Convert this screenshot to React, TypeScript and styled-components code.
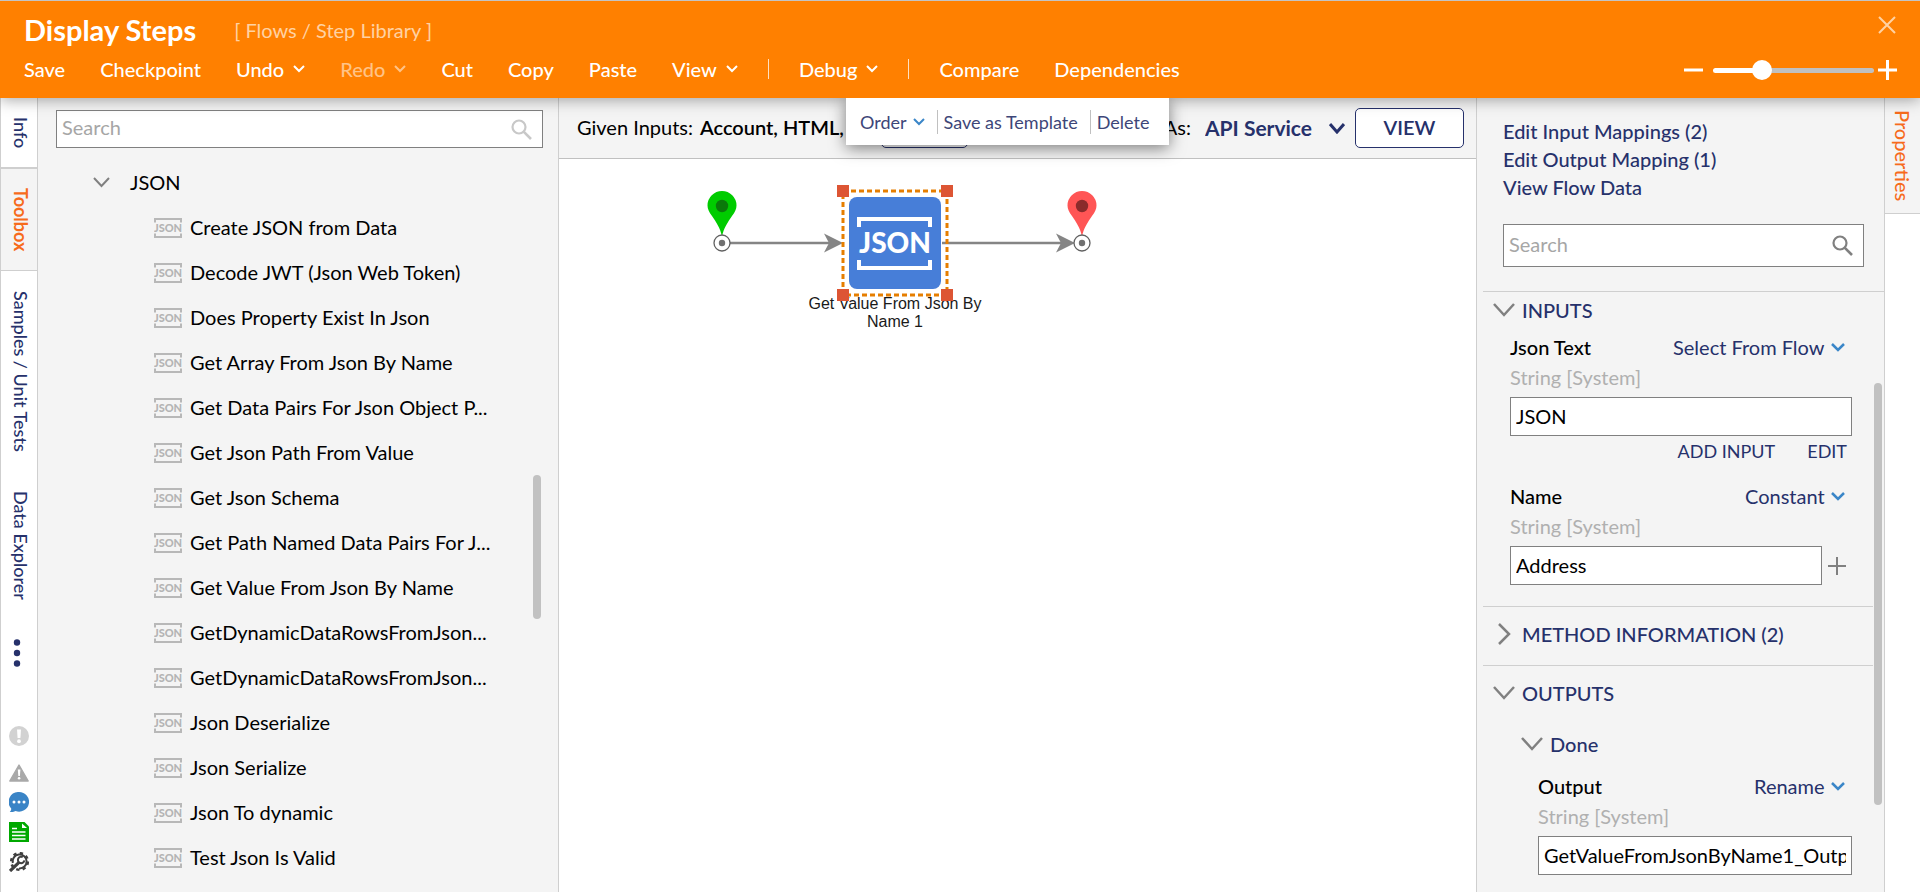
import React from "react";
import styled, { createGlobalStyle } from "styled-components";

const navy = "#26316b";
const line = "#cfcfcf";
const panel = "#f4f4f4";

const GlobalStyle = createGlobalStyle`
  *, *::before, *::after { box-sizing: border-box; }
  body { margin: 0; background: #fff; }
  body, button, input, select {
    font-family: Lato, "Liberation Sans", sans-serif;
    font-size: 20px;
  }
  button, select {
    appearance: none;
    border: 0;
    padding: 0;
    background: none;
    color: inherit;
    cursor: pointer;
  }
  svg { display: block; flex: none; }
`;

const Page = styled.div`
  display: flex;
  flex-direction: column;
  height: 100vh;
  overflow: hidden;
`;

/* ---------- header ---------- */

const Header = styled.header`
  position: relative;
  z-index: 2;
  display: flex;
  justify-content: space-between;
  height: 98px;
  padding: 14px 23px 0 24px;
  border-top: 1px solid #c4c4c4;
  background: #ff8000;
  color: #fff;
  box-shadow: 0 2px 14px rgba(0, 0, 0, 0.35);
`;

const TitleRow = styled.div`
  display: flex;
  align-items: center;
  gap: 38px;
  height: 30px;
`;

const Title = styled.h1`
  margin: 0;
  font-size: 29px;
  line-height: 30px;
  font-weight: 700;
`;

const Breadcrumb = styled.span`
  color: #ffd2a3;
  line-height: 30px;
`;

const MenuBar = styled.nav`
  display: flex;
  align-items: center;
  gap: 35px;
  height: 30px;
  margin-top: 9px;
`;

const MenuButton = styled.button<{ $muted?: boolean }>`
  display: flex;
  align-items: center;
  gap: 9px;
  line-height: 30px;
  font-weight: 500;
  color: ${(p) => (p.$muted ? "#ffc387" : "#fff")};
`;

const MenuDivider = styled.span`
  width: 1px;
  height: 20px;
  margin: 0 -5px;
  background: #ffe0c0;
`;

const HeaderTools = styled.div`
  display: flex;
  flex-direction: column;
  align-items: flex-end;
  gap: 25px;
`;

const IconButton = styled.button`
  display: grid;
  place-items: center;
`;

const ZoomRow = styled.div`
  display: flex;
  align-items: center;
  gap: 4px;
`;

const ZoomSlider = styled.input<{ $fill: number }>`
  appearance: none;
  width: 161px;
  height: 20px;
  margin: 0 0 0 6px;
  background: none;
  &::-webkit-slider-runnable-track {
    height: 5px;
    border-radius: 3px;
    background: linear-gradient(90deg, #fff ${(p) => p.$fill}%, #c0c0c0 ${(p) => p.$fill}%);
  }
  &::-webkit-slider-thumb {
    appearance: none;
    width: 20px;
    height: 20px;
    margin-top: -8px;
    border-radius: 50%;
    background: #fff;
  }
`;

/* ---------- body ---------- */

const Body = styled.div`
  flex: 1;
  min-height: 0;
  display: grid;
  grid-template-columns: 38px 521px minmax(0, 1fr) 408px 36px;
`;

const LeftRail = styled.aside`
  display: flex;
  flex-direction: column;
  border-left: 1px solid ${line};
  border-right: 1px solid ${line};
`;

const RailTab = styled.button<{ $active?: boolean; $size: number }>`
  display: flex;
  align-items: center;
  justify-content: center;
  height: ${(p) => p.$size}px;
  padding-left: 4px;
  writing-mode: vertical-rl;
  font-size: 18px;
  font-weight: ${(p) => (p.$active ? 700 : 500)};
  color: ${(p) => (p.$active ? "#f76b1c" : navy)};
  background: ${(p) => (p.$active ? panel : "#fff")};
  border: 0 solid ${line};
  border-width: ${(p) => (p.$active ? "2px 0 1px" : "0")};
`;

const MoreButton = styled(IconButton)`
  width: 32px;
  margin-top: 20px;
`;

const StatusIcons = styled.div`
  display: flex;
  flex-direction: column;
  align-items: center;
  gap: 10px;
  margin-top: auto;
  margin-bottom: 20px;
  & > :first-child { margin-bottom: 8px; }
`;

const RightRail = styled.aside`
  border-left: 1px solid ${line};
`;

const PropertiesTab = styled.button`
  width: 100%;
  height: 116px;
  writing-mode: vertical-rl;
  font-weight: 500;
  color: #f76b1c;
  background: ${panel};
  border-bottom: 1px solid ${line};
`;

/* ---------- toolbox ---------- */

const Toolbox = styled.section`
  display: grid;
  grid-template-rows: auto minmax(0, 1fr);
  gap: 12px;
  padding: 12px 15px 0 18px;
  background: ${panel};
  border-right: 1px solid ${line};
`;

const SearchBox = styled.label<{ $size: number }>`
  display: flex;
  align-items: center;
  height: ${(p) => p.$size}px;
  padding-right: 10px;
  border: 1px solid #808080;
  background: #fff;
`;

const SearchInput = styled.input`
  flex: 1;
  min-width: 0;
  height: 100%;
  padding: 0 5px 4px;
  border: 0;
  background: none;
  outline: 0;
  &::placeholder { color: #a6a6a6; }
`;

const TreeArea = styled.div`
  display: grid;
  grid-template-columns: minmax(0, 1fr) 10px;
  overflow: hidden;
`;

const Thumb = styled.div<{ $top: number; $size: number }>`
  width: 8px;
  height: ${(p) => p.$size}px;
  margin-top: ${(p) => p.$top}px;
  border-radius: 4px;
  background: #c1c1c1;
`;

const Tree = styled.div`
  overflow: hidden;
`;

const TreeGroup = styled.button`
  display: flex;
  align-items: center;
  gap: 20px;
  padding-left: 37px;
  line-height: 45px;
`;

const TreeList = styled.ul`
  margin: 0;
  padding: 0 38px 0 98px;
  list-style: none;
`;

const TreeItem = styled.li`
  display: flex;
  align-items: center;
  gap: 8px;
  line-height: 45px;
  white-space: nowrap;
`;

const ItemText = styled.span`
  color: #000;
`;

/* ---------- designer ---------- */

const Designer = styled.main`
  display: flex;
  flex-direction: column;
  min-width: 0;
`;

const DesignerBar = styled.div`
  position: relative;
  display: flex;
  align-items: center;
  height: 61px;
  padding: 0 12px 0 18px;
  white-space: nowrap;
  background: ${panel};
  border-bottom: 1px solid #c0c0c0;
`;

const GivenInputs = styled.span`
  display: flex;
  gap: 7px;
  width: 304px;
  padding-bottom: 2px;
  line-height: 24px;
  overflow: hidden;
`;

const Strong = styled.b`
  font-weight: 600;
`;

const OutlineButton = styled.button<{ $wide?: boolean }>`
  width: ${(p) => (p.$wide ? 109 : 87)}px;
  height: 40px;
  padding-bottom: 2px;
  border: 1px solid ${navy};
  border-radius: 5px;
  background: #fff;
  color: ${navy};
  font-weight: 600;
`;

const ViewAs = styled.div`
  display: flex;
  align-items: center;
  gap: 10px;
  margin-left: auto;
  line-height: 24px;
`;

const ViewAsLabel = styled.label`
  padding: 0 4px 2px 0;
`;

const SelectWrap = styled.span<{ $gap?: number }>`
  display: flex;
  align-items: center;
  gap: ${(p) => p.$gap ?? 6}px;
`;

const BoldSelect = styled.select`
  height: 26px;
  padding-bottom: 2px;
  color: ${navy};
  font-size: 21px;
  font-weight: 700;
`;

const FieldSelect = styled.select`
  height: 30px;
  color: ${navy};
`;

const StepMenu = styled.div`
  position: absolute;
  z-index: 3;
  top: 0;
  left: 287px;
  display: flex;
  align-items: center;
  gap: 6px;
  height: 47px;
  padding: 0 20px 0 14px;
  background: #fff;
  box-shadow: 0 3px 16px rgba(0, 0, 0, 0.5);
  clip-path: inset(0 -30px -30px -30px);
`;

const StepAction = styled.button`
  display: flex;
  align-items: center;
  gap: 6px;
  margin-right: 6px;
  line-height: 24px;
  font-size: 18px;
  color: #3d4678;
  &:last-child { margin-right: 0; }
`;

const StepDivider = styled.span`
  width: 1px;
  height: 24px;
  background: #c0c0c0;
`;

const Canvas = styled.div`
  flex: 1;
  min-height: 0;
  overflow: hidden;
`;

/* ---------- properties ---------- */

const Properties = styled.section`
  display: flex;
  flex-direction: column;
  min-width: 0;
  padding-left: 6px;
  background: ${panel};
  border-left: 1px solid ${line};
`;

const PropertiesTop = styled.div`
  padding: 19px 20px 24px;
`;

const LinkList = styled.nav`
  display: flex;
  flex-direction: column;
  align-items: flex-start;
  margin-bottom: 23px;
`;

const PanelLink = styled.a`
  color: ${navy};
  font-weight: 500;
  line-height: 28px;
  text-decoration: none;
`;

const PropertiesScroll = styled.div`
  flex: 1;
  min-height: 0;
  display: grid;
  grid-template-columns: minmax(0, 1fr) 10px;
  column-gap: 1px;
  overflow: hidden;
  border-top: 1px solid ${line};
`;

const Group = styled.div<{ $tight?: boolean }>`
  padding-top: ${(p) => (p.$tight ? 3 : 12)}px;
  padding-bottom: ${(p) => (p.$tight ? 21 : 16)}px;
  & + & { border-top: 1px solid ${line}; }
`;

const GroupHeader = styled.button<{ $nested?: boolean }>`
  display: flex;
  align-items: center;
  gap: 7px;
  margin: ${(p) => (p.$nested ? "21px 0 0 38px" : "0 0 0 10px")};
  line-height: 30px;
  font-weight: 500;
  color: ${navy};
`;

const Field = styled.div<{ $nested?: boolean; $gap: number }>`
  display: flex;
  flex-direction: column;
  margin: ${(p) => p.$gap}px 21px 0 ${(p) => (p.$nested ? 55 : 27)}px;
`;

const FieldHead = styled.div`
  display: flex;
  justify-content: space-between;
  padding-right: 7px;
  line-height: 30px;
`;

const FieldLabel = styled.label`
  font-weight: 500;
`;

const FieldType = styled.span`
  margin-bottom: 5px;
  line-height: 30px;
  color: #b0b0b0;
`;

const FieldRow = styled.div`
  display: flex;
  align-items: center;
  gap: 6px;
`;

const TextInput = styled.input`
  flex: 1;
  min-width: 0;
  height: 39px;
  padding: 0 5px 2px;
  border: 1px solid #808080;
  background: #fff;
  outline: 0;
`;

const AddButton = styled(IconButton)`
  margin-right: 6px;
`;

const FieldActions = styled.div`
  display: flex;
  justify-content: flex-end;
  gap: 32px;
  margin-top: 2px;
  padding-right: 5px;
`;

const TextButton = styled.button`
  font-size: 18px;
  line-height: 26px;
  color: ${navy};
`;

/* ---------- icons ---------- */

type ChevronProps = { w: number; h: number; color?: string; weight?: number };

const Chevron = ({ w, h, color = "currentColor", weight = 2 }: ChevronProps) => (
  <svg width={w} height={h} viewBox={`0 0 ${w} ${h}`} fill="none" stroke={color} strokeWidth={weight}>
    <path d={`M1 1L${w / 2} ${h - 2}L${w - 1} 1`} />
  </svg>
);

const ChevronRight = () => (
  <svg width="22" height="22" viewBox="0 0 22 22" fill="none" stroke="#808080" strokeWidth="2.5">
    <path d="M6 1L16 11L6 21" />
  </svg>
);

const SearchIcon = ({ color }: { color: string }) => (
  <svg width="21" height="21" viewBox="0 0 21 21" fill="none" stroke={color} strokeWidth="2.2">
    <circle cx="8" cy="8" r="6.5" />
    <path d="M12.6 12.6L20 20" strokeWidth="2.6" />
  </svg>
);

const JsonIcon = () => (
  <svg width="28" height="20" viewBox="0 0 28 20" aria-hidden="true">
    <g fill="none" stroke="#b8b8b8" strokeWidth="2">
      <path d="M1 4.500V1H27V4.500" />
      <path d="M1 15.500V19H27V15.500" />
    </g>
    <text x="14" y="14" textAnchor="middle" fontSize="11" fontWeight="900" fill="#b4b4b4">JSON</text>
  </svg>
);

const ErrorIcon = () => (
  <svg width="20" height="20" viewBox="0 0 20 20">
    <circle cx="10" cy="10" r="10" fill="#d2d2d2" />
    <path d="M8 3.5h4l-.6 8.5H8.6z" fill="#fff" />
    <circle cx="10" cy="15.2" r="1.9" fill="#fff" />
  </svg>
);

const WarningIcon = () => (
  <svg width="20" height="18" viewBox="0 0 20 18">
    <path d="M10 1L19.2 17H.8z" fill="#a9a9a9" stroke="#a9a9a9" strokeLinejoin="round" strokeWidth="1.4" />
    <path d="M8.8 5.5h2.6l-.5 6.5H9.3z" fill="#fff" />
    <circle cx="10.1" cy="14.3" r="1.3" fill="#fff" />
  </svg>
);

const CommentIcon = () => (
  <svg width="20" height="20" viewBox="0 0 20 20">
    <path d="M10 0a10 9.8 0 1 1-3.4 19C5 20 3 20 .8 20c1-1 1.5-2.2 1.4-3.6A10 9.8 0 0 1 10 0z" fill="#3a84c6" />
    <g fill="#fff">
      <circle cx="5" cy="10" r="1.5" />
      <circle cx="10" cy="10" r="1.5" />
      <circle cx="15" cy="10" r="1.5" />
    </g>
  </svg>
);

const DocumentIcon = () => (
  <svg width="20" height="20" viewBox="0 0 20 20">
    <path d="M0 0H15.5L20 4.5V20H0z" fill="#00a800" />
    <path d="M13 1.5V6H18z" fill="#fff" />
    <path d="M3 6.5H8M3 10H16.5M3 13.5H16.5M3 17H16.5" stroke="#fff" strokeWidth="1.3" />
  </svg>
);

const GearIcon = () => (
  <svg width="20" height="20" viewBox="0 0 20 20" fill="none" stroke="#404040">
    <circle cx="10.5" cy="9.5" r="8.3" strokeWidth="2.6" strokeDasharray="3.26 3.26" />
    <path d="M3.8 11A7 7 0 1 1 10 16.4" strokeWidth="2" />
    <path d="M1 19L10.5 9.8" strokeWidth="3.2" />
    <path d="M13.8 5.2A3.2 3.2 0 1 0 15.3 8.3" strokeWidth="2" />
  </svg>
);

const Pin = ({ x, fill, core }: { x: number; fill: string; core: string }) => (
  <g transform={`translate(${x} 0)`}>
    <path d="M0 78C-1.5 69-6 63-10 57C-13 53-14.5 50-14.5 46.5A14.5 14.5 0 0 1 14.5 46.5C14.5 50 13 53 10 57C6 63 1.5 69 0 78z" fill={fill} />
    <circle cy="47" r="6.2" fill={core} />
    <circle cy="84" r="8" fill="#fff" stroke="#606060" strokeWidth="1.3" />
    <circle cy="84" r="3.2" fill="#707070" />
  </g>
);

const FlowDiagram = () => (
  <svg width="560" height="220" viewBox="0 0 560 220" fontFamily="'Liberation Sans', Arial, sans-serif">
    <g stroke="#858585" strokeWidth="2.4">
      <path d="M171 84H276M383 84H507" />
    </g>
    <g fill="#858585">
      <path d="M284 84L265 74.5L270 84L265 93.5z" />
      <path d="M516 84L497 74.5L502 84L497 93.5z" />
    </g>
    <Pin x={163} fill="#00cc00" core="#0a7a0a" />
    <Pin x={523} fill="#ff5555" core="#8a2b2b" />
    <rect x="290" y="38" width="92" height="92" rx="8" fill="#477ed8" />
    <g fill="none" stroke="#fff" strokeWidth="4">
      <path d="M300 68V60H371V68" />
      <path d="M300 101V109H371V101" />
    </g>
    <text x="336" y="94" textAnchor="middle" fontFamily="Lato, sans-serif" fontSize="28" fontWeight="900" fill="#fff">JSON</text>
    <g fontSize="16" fill="#1a1a1a" textAnchor="middle">
      <text x="336" y="150">Get Value From Json By</text>
      <text x="336" y="168">Name 1</text>
    </g>
    <rect x="284" y="32" width="104" height="104" fill="none" stroke="#e67e00" strokeWidth="3" strokeDasharray="5 3" />
    <g fill="#dd5534">
      <rect x="278" y="26" width="12" height="12" />
      <rect x="382" y="26" width="12" height="12" />
      <rect x="278" y="130" width="12" height="12" />
      <rect x="382" y="130" width="12" height="12" />
    </g>
  </svg>
);

/* ---------- content ---------- */

const steps = [
  "Create JSON from Data",
  "Decode JWT (Json Web Token)",
  "Does Property Exist In Json",
  "Get Array From Json By Name",
  "Get Data Pairs For Json Object P...",
  "Get Json Path From Value",
  "Get Json Schema",
  "Get Path Named Data Pairs For J...",
  "Get Value From Json By Name",
  "GetDynamicDataRowsFromJson...",
  "GetDynamicDataRowsFromJson...",
  "Json Deserialize",
  "Json Serialize",
  "Json To dynamic",
  "Test Json Is Valid",
];

const MenuArrow = () => <Chevron w={12} h={8} />;

const ModeSelect = ({ label, value }: { label: string; value: string }) => (
  <SelectWrap>
    <FieldSelect aria-label={label} defaultValue={value}>
      <option>{value}</option>
    </FieldSelect>
    <Chevron w={14} h={9} color="#3a86c8" weight={2.5} />
  </SelectWrap>
);

export default function App() {
  const [zoom, setZoom] = React.useState(28);
  return (
    <Page>
      <GlobalStyle />
      <Header>
        <div>
          <TitleRow>
            <Title>Display Steps</Title>
            <Breadcrumb>[ Flows / Step Library ]</Breadcrumb>
          </TitleRow>
          <MenuBar>
            <MenuButton>Save</MenuButton>
            <MenuButton>Checkpoint</MenuButton>
            <MenuButton>Undo <MenuArrow /></MenuButton>
            <MenuButton $muted>Redo <MenuArrow /></MenuButton>
            <MenuButton>Cut</MenuButton>
            <MenuButton>Copy</MenuButton>
            <MenuButton>Paste</MenuButton>
            <MenuButton>View <MenuArrow /></MenuButton>
            <MenuDivider />
            <MenuButton>Debug <MenuArrow /></MenuButton>
            <MenuDivider />
            <MenuButton>Compare</MenuButton>
            <MenuButton>Dependencies</MenuButton>
          </MenuBar>
        </div>
        <HeaderTools>
          <IconButton aria-label="Close">
            <svg width="20" height="20" viewBox="0 0 20 20" stroke="#ffd2a3" strokeWidth="2">
              <path d="M2 2L18 18M18 2L2 18" />
            </svg>
          </IconButton>
          <ZoomRow>
            <IconButton aria-label="Zoom out">
              <svg width="19" height="20" viewBox="0 0 19 20" stroke="#fff" strokeWidth="3">
                <path d="M0 10H19" />
              </svg>
            </IconButton>
            <ZoomSlider
              type="range"
              aria-label="Zoom"
              $fill={zoom}
              value={zoom}
              onChange={(e) => setZoom(Number(e.target.value))}
            />
            <IconButton aria-label="Zoom in">
              <svg width="19" height="20" viewBox="0 0 19 20" stroke="#fff" strokeWidth="3">
                <path d="M0 10H19M9.5 0V20" />
              </svg>
            </IconButton>
          </ZoomRow>
        </HeaderTools>
      </Header>

      <Body>
        <LeftRail>
          <RailTab $size={69}>Info</RailTab>
          <RailTab $size={104} $active>Toolbox</RailTab>
          <RailTab $size={200}>Samples / Unit Tests</RailTab>
          <RailTab $size={148}>Data Explorer</RailTab>
          <MoreButton aria-label="More">
            <svg width="8" height="28" viewBox="0 0 8 28" fill={navy}>
              <circle cx="4" cy="3.5" r="3.2" />
              <circle cx="4" cy="14" r="3.2" />
              <circle cx="4" cy="24.5" r="3.2" />
            </svg>
          </MoreButton>
          <StatusIcons>
            <ErrorIcon />
            <WarningIcon />
            <CommentIcon />
            <DocumentIcon />
            <GearIcon />
          </StatusIcons>
        </LeftRail>

        <Toolbox>
          <SearchBox $size={38}>
            <SearchInput placeholder="Search" aria-label="Search toolbox" />
            <SearchIcon color="#c8c8c8" />
          </SearchBox>
          <TreeArea>
            <Tree>
              <TreeGroup aria-expanded="true">
                <Chevron w={17} h={11} color="#808080" />
                JSON
              </TreeGroup>
              <TreeList>
                {steps.map((s, i) => (
                  <TreeItem key={i}>
                    <JsonIcon />
                    <ItemText>{s}</ItemText>
                  </TreeItem>
                ))}
              </TreeList>
            </Tree>
            <Thumb $top={315} $size={144} />
          </TreeArea>
        </Toolbox>

        <Designer>
          <DesignerBar>
            <GivenInputs>
              Given Inputs: <Strong>Account, HTML,</Strong>
            </GivenInputs>
            <OutlineButton aria-label="Edit inputs" />
            <ViewAs>
              <ViewAsLabel htmlFor="view-as">As:</ViewAsLabel>
              <SelectWrap $gap={16}>
                <BoldSelect id="view-as" defaultValue="API Service">
                  <option>API Service</option>
                </BoldSelect>
                <Chevron w={16} h={11} color={navy} weight={3} />
              </SelectWrap>
              <OutlineButton $wide>VIEW</OutlineButton>
            </ViewAs>
            <StepMenu>
              <StepAction>Order <Chevron w={12} h={8} color="#3a86c8" weight={2} /></StepAction>
              <StepDivider />
              <StepAction>Save as Template</StepAction>
              <StepDivider />
              <StepAction>Delete</StepAction>
            </StepMenu>
          </DesignerBar>
          <Canvas>
            <FlowDiagram />
          </Canvas>
        </Designer>

        <Properties>
          <PropertiesTop>
            <LinkList>
              <PanelLink href="#inputs">Edit Input Mappings (2)</PanelLink>
              <PanelLink href="#outputs">Edit Output Mapping (1)</PanelLink>
              <PanelLink href="#data">View Flow Data</PanelLink>
            </LinkList>
            <SearchBox $size={43}>
              <SearchInput placeholder="Search" aria-label="Search properties" />
              <SearchIcon color="#808080" />
            </SearchBox>
          </PropertiesTop>
          <PropertiesScroll>
            <div>
              <Group $tight>
                <GroupHeader aria-expanded="true">
                  <Chevron w={22} h={14} color="#808080" weight={2.5} />
                  INPUTS
                </GroupHeader>
                <Field $gap={7}>
                  <FieldHead>
                    <FieldLabel htmlFor="json-text">Json Text</FieldLabel>
                    <ModeSelect label="Json Text source" value="Select From Flow" />
                  </FieldHead>
                  <FieldType>String [System]</FieldType>
                  <FieldRow>
                    <TextInput id="json-text" defaultValue="JSON" />
                  </FieldRow>
                  <FieldActions>
                    <TextButton>ADD INPUT</TextButton>
                    <TextButton>EDIT</TextButton>
                  </FieldActions>
                </Field>
                <Field $gap={17}>
                  <FieldHead>
                    <FieldLabel htmlFor="name">Name</FieldLabel>
                    <ModeSelect label="Name source" value="Constant" />
                  </FieldHead>
                  <FieldType>String [System]</FieldType>
                  <FieldRow>
                    <TextInput id="name" defaultValue="Address" />
                    <AddButton aria-label="Add name">
                      <svg width="18" height="18" viewBox="0 0 18 18" stroke="#808080" strokeWidth="2">
                        <path d="M0 9H18M9 0V18" />
                      </svg>
                    </AddButton>
                  </FieldRow>
                </Field>
              </Group>
              <Group>
                <GroupHeader aria-expanded="false">
                  <ChevronRight />
                  METHOD INFORMATION (2)
                </GroupHeader>
              </Group>
              <Group>
                <GroupHeader aria-expanded="true">
                  <Chevron w={22} h={14} color="#808080" weight={2.5} />
                  OUTPUTS
                </GroupHeader>
                <GroupHeader $nested aria-expanded="true">
                  <Chevron w={22} h={14} color="#808080" weight={2.5} />
                  Done
                </GroupHeader>
                <Field $nested $gap={12}>
                  <FieldHead>
                    <FieldLabel htmlFor="output">Output</FieldLabel>
                    <ModeSelect label="Output action" value="Rename" />
                  </FieldHead>
                  <FieldType>String [System]</FieldType>
                  <FieldRow>
                    <TextInput id="output" defaultValue="GetValueFromJsonByName1_Output" />
                  </FieldRow>
                </Field>
              </Group>
            </div>
            <Thumb $top={91} $size={422} />
          </PropertiesScroll>
        </Properties>

        <RightRail>
          <PropertiesTab>Properties</PropertiesTab>
        </RightRail>
      </Body>
    </Page>
  );
}
